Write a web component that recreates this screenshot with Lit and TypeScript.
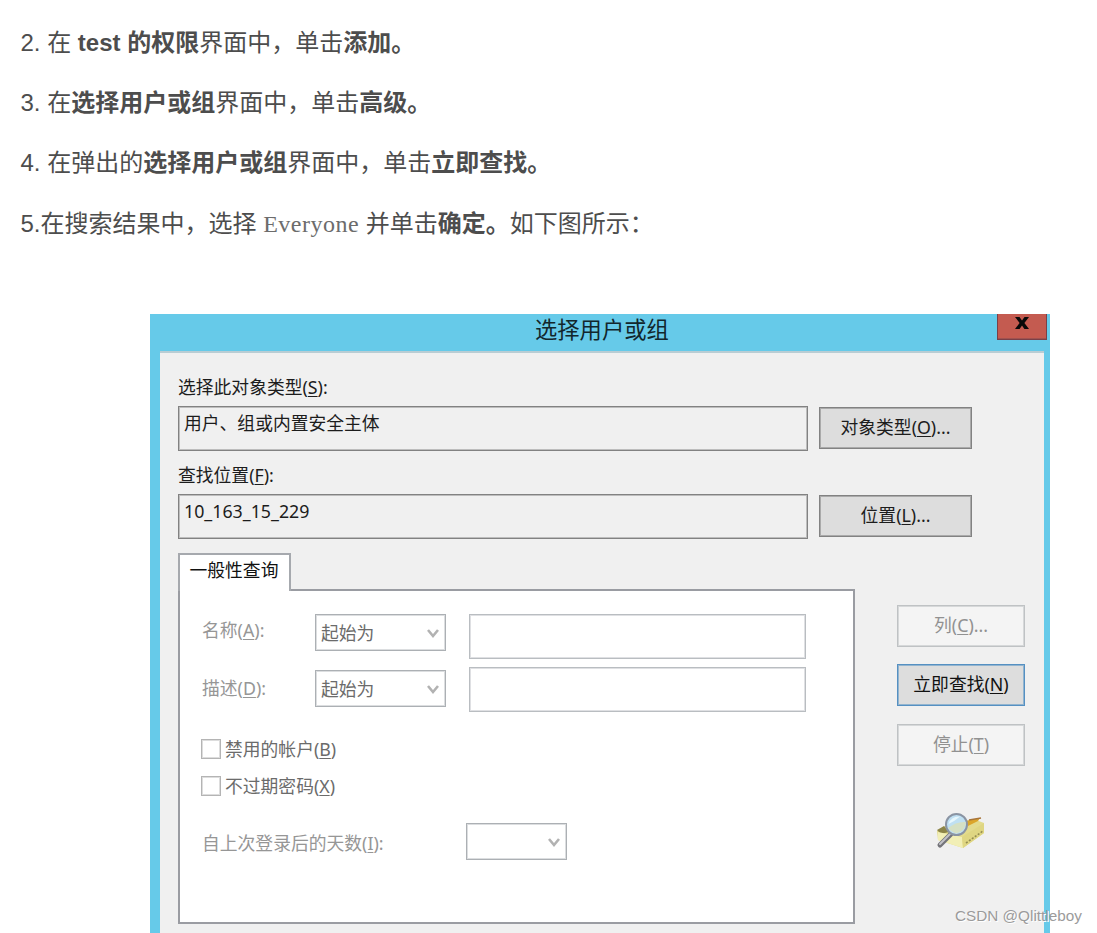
import { LitElement, html, css } from "lit";
import { customElement } from "lit/decorators.js";

const key = (label: string, k: string, tail = "") => html`${label}(<u>${k}</u>)${tail}`;
const chevron = html`<svg class="chev" viewBox="0 0 14 12"><path d="M2 3 L7 9 L12 3" fill="none" stroke="#b2b2b2" stroke-width="2.6"/></svg>`;

@customElement("app-root")
export class AppRoot extends LitElement {
  static styles = css`
    :host { display: block; width: 1097px; height: 933px; overflow: hidden; position: relative; background: #fff;
      font-family: "Liberation Sans", "Noto Sans CJK SC", sans-serif; color: #4d4d4d; }
    * { box-sizing: border-box; }
    .steps { height: 314px; padding: 25px 0 0 20.5px; font-size: 24px; }
    .steps p { margin: 0 0 24px; height: 36px; line-height: 36px; white-space: pre; }
    .steps p:nth-child(3) { margin-bottom: 25px; }
    .steps b { font-weight: 700; }
    .mono { display: inline-block; width: 96px; line-height: 30px; font-family: "Liberation Serif", serif; font-size: 24px; letter-spacing: 0.5px; color: #6c6c6c; }
    .dialog { width: 900px; height: 619px; margin-left: 150px; background: #66cae9; display: flex; flex-direction: column;
      font: 17.8px/24px "Noto Sans", "Noto Sans CJK SC", sans-serif; color: #1c1c1c; }
    .title { height: 37px; flex: none; display: grid; grid-template-columns: 847px 50px; align-items: start; }
    .title span { padding-left: 385px; font-size: 22.3px; line-height: 31px; color: #12262c; white-space: nowrap; }
    .close { height: 26px; border: 1px solid #7a4048; border-top: 0; box-shadow: inset 0 -1px 0 #a0524f; background: #c45b50; display: flex; justify-content: center; padding-top: 3px; }
    .close svg { width: 14px; height: 12px; }
    .client { flex: 1; margin: 0 6px 0 10px; background: #f0f0f0; border-top: 2px solid #b9cdd4; padding: 21px 18px 0; min-height: 0; display: flex; flex-direction: column; }
    .lab { height: 32px; line-height: 26px; white-space: nowrap; }
    .row { display: grid; grid-template-columns: 630px 153px; column-gap: 11px; height: 45px; align-items: start; }
    .field, .btn, .sel, .inp { border: 1px solid var(--edge, #828282); box-shadow: inset 0 0 0 1px var(--soft, #bdbdbd); }
    .field { height: 45px; padding: 3px 5px; line-height: 26px; white-space: nowrap; }
    .row + .lab { margin-top: 11px; }
    .btn { display: flex; align-items: center; justify-content: center; height: 42px; padding-bottom: 2px; background: #ddd; --soft: #aaa; white-space: nowrap; }
    .row .btn { margin-top: 1px; }
    .btn.off { --edge: #bfc2c4; --soft: #d6d8d9; background: #f4f4f4; color: #919191; }
    .btn.go { --edge: #5590c2; --soft: #92b4cf; color: #111; }
    .lower { display: grid; grid-template-columns: 677px 128px; column-gap: 42px; margin-top: 14px; height: 371px; }
    .tabs { display: flex; flex-direction: column; }
    .head { display: flex; height: 38px; }
    .tab { width: 113px; height: 38px; border: 2px solid #a6a9ae; border-bottom: 0; background: #fff; padding-left: 9.5px; line-height: 30px; white-space: nowrap; color: #111; }
    .head i { flex: 1; border-bottom: 2px solid #9a9ca2; }
    .pane { flex: 1; border: 2px solid #9a9ca2; border-top: 0; background: #fff; padding: 23px 0 0 22px; color: #969696; }
    .q { display: grid; grid-template-columns: 113px 131px 23px 337px; align-items: start; height: 53px; white-space: nowrap; }
    .q > span { line-height: 32px; }
    .q.two > span { margin-top: 5px; }
    .q.two .sel { margin-top: 3px; }
    .sel { height: 37px; --edge: #acb0b4; --soft: #dcdee0; display: flex; align-items: center; padding: 0 5px 0 5px; color: #6b6b6b; background: #fff; justify-content: space-between; }
    .chev { width: 14px; height: 12px; }
    .inp { height: 45px; --edge: #b9bdc1; --soft: #dfe0e3; }
    .chk { display: flex; align-items: center; gap: 4px; height: 37px; color: #6b6b6b; white-space: nowrap; }
    .chk.first { margin-top: 10px; }
    .chk i { width: 20px; height: 20px; margin-left: -1px; border: 1px solid #b4b4b4; box-shadow: inset 0 0 0 1px #ddd; }
    .last { display: grid; grid-template-columns: 264px 101px; margin-top: 19px; white-space: nowrap; align-items: center; }
    .last > span { padding-top: 2px; }
    .side { display: flex; flex-direction: column; padding-top: 52px; }
    .side .btn { margin-bottom: 17px; }
    .side .go { margin-bottom: 18px; }
    .book { width: 52px; height: 42px; margin: 29px 0 0 38px; }
    u { text-decoration-thickness: 1px; text-underline-offset: 2px; }
    .mark { position: absolute; left: 955px; top: 906px; font-size: 15.3px; line-height: 20px; color: #9b9b9b; white-space: nowrap; font-family: "Liberation Sans", sans-serif; text-shadow: 1px 1px 0 #fff; }
  `;

  query(label: string, k: string, cls = "") {
    return html`<div class="q ${cls}"><span>${key(label, k, ":")}</span><div class="sel"><span>起始为</span>${chevron}</div><span></span><div class="inp"></div></div>`;
  }

  render() {
    return html`
      <div class="steps">
        <p>2. 在 <b>test 的权限</b>界面中，单击<b>添加。</b></p>
        <p>3. 在<b>选择用户或组</b>界面中，单击<b>高级。</b></p>
        <p>4. 在弹出的<b>选择用户或组</b>界面中，单击<b>立即查找。</b></p>
        <p>5.在搜索结果中，选择 <span class="mono">Everyone</span> 并单击<b>确定。</b>如下图所示：</p>
      </div>
      <div class="dialog">
        <div class="title"><span>选择用户或组</span><div class="close"><svg viewBox="0 0 14 12"><path d="M0 0H4.5L7 3.4 9.5 0H14L9.4 5.9 14 12H9.4L7 8.4 4.6 12H0L4.6 5.9Z" fill="#080808"/></svg></div></div>
        <div class="client">
          <div class="lab">${key("选择此对象类型", "S", ":")}</div>
          <div class="row"><div class="field">用户、组或内置安全主体</div><div class="btn"><span>${key("对象类型", "O", "...")}</span></div></div>
          <div class="lab">${key("查找位置", "F", ":")}</div>
          <div class="row"><div class="field">10_163_15_229</div><div class="btn"><span>${key("位置", "L", "...")}</span></div></div>
          <div class="lower">
            <div class="tabs">
              <div class="head"><div class="tab">一般性查询</div><i></i></div>
              <div class="pane">
                ${this.query("名称", "A")}
                ${this.query("描述", "D", "two")}
                <div class="chk first"><i></i><span>${key("禁用的帐户", "B")}</span></div>
                <div class="chk"><i></i><span>${key("不过期密码", "X")}</span></div>
                <div class="last"><span>${key("自上次登录后的天数", "I", ":")}</span><div class="sel"><span></span>${chevron}</div></div>
              </div>
            </div>
            <div class="side">
              <div class="btn off"><span>${key("列", "C", "...")}</span></div>
              <div class="btn go"><span>${key("立即查找", "N")}</span></div>
              <div class="btn off"><span>${key("停止", "T")}</span></div>
              <svg class="book" viewBox="0 0 52 42">
                <path d="M2 19 L10 14 L41 8 L49 11 L49 21 L28 36 L3 28Z" fill="#e3db8c"/>
                <path d="M2 18 L9 14 L14 20 L6 22Z" fill="#8d8548"/>
                <path d="M3 20 L27 25 L28 36 L3 28Z" fill="#f2efb6"/>
                <path d="M27 25 L49 11 L49 21 L28 36Z" fill="#dfd682"/>
                <path d="M30 9 L45 6 L43 9 L33 14Z" fill="#dba52a"/>
                <path d="M34 8 L46 6" stroke="#a8743a" stroke-width="1.6"/>
                <path d="M31 31 L48 19" stroke="#948c50" stroke-width="1.6" stroke-dasharray="2 1.6"/>
                <path d="M16 22 L5 33" stroke="#74747a" stroke-width="5" stroke-linecap="round"/>
                <path d="M16 21 L5 32" stroke="#c2c2c8" stroke-width="2" stroke-linecap="round"/>
                <circle cx="21.5" cy="12.5" r="10.5" fill="#bfe0f3" stroke="#8a94a3" stroke-width="2"/>
                <path d="M13 16 Q22 9 31 10 Q30 20 21 21.500 Q16 20 13 16Z" fill="#d5e0c4"/>
                <path d="M13.500 12 Q16 4 25 4.500 Q20 9 13.500 12Z" fill="#e7f7fd"/>
              </svg>
            </div>
          </div>
        </div>
      </div>
      <div class="mark">CSDN @Qlittleboy</div>
    `;
  }
}
